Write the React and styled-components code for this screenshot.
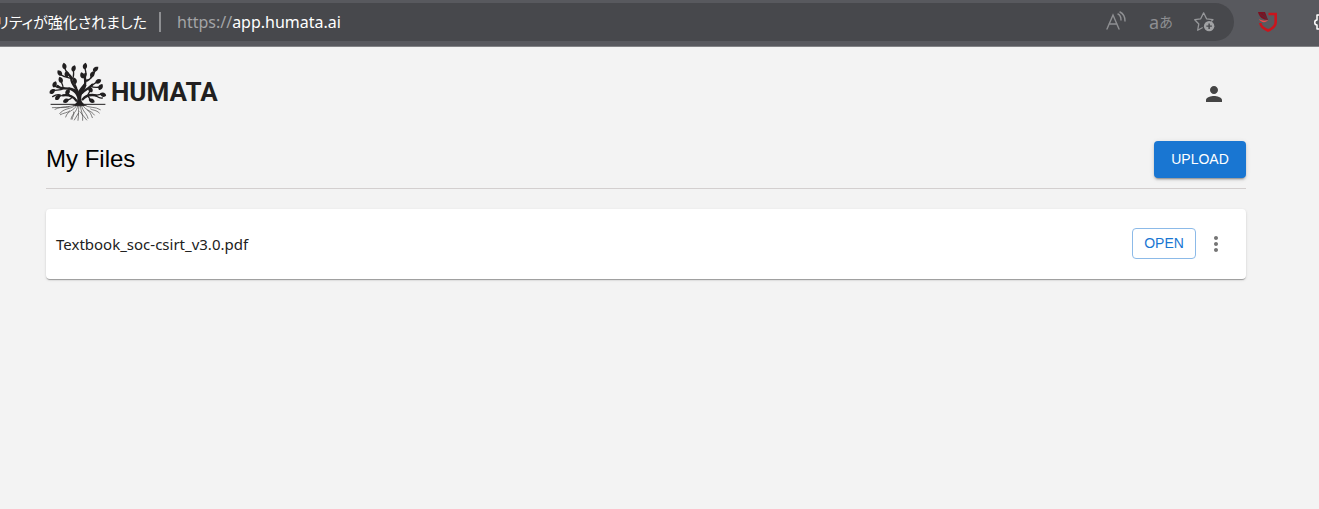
import React, { useState } from 'react';
import styled, { createGlobalStyle } from 'styled-components';
import { MdMoreVert, MdPerson } from 'react-icons/md';

const files = [{ id: 1, name: 'Textbook_soc-csirt_v3.0.pdf' }];

const leaves = [
  [56, 18, -10], [84, 25, 20], [118, 18, 10], [42, 39, -35], [63, 42, 0],
  [140, 43, 25], [27, 73, 20], [45, 60, -20], [87, 62, -15], [150, 27, 50],
  [110, 46, -20], [158, 64, 60], [20, 94, 50], [165, 81, 30], [66, 96, 30],
  [36, 112, 40], [134, 88, -30], [172, 104, -70], [61, 122, 60], [138, 122, -60],
];

const TreeLogo = () => (
  <svg width="64" height="64" viewBox="1 0 192 192" fill="none" stroke="#211f20" strokeLinecap="round">
    <path
      d="M80 136c14-4 17-13 14-24-4-14-15-21-30-25l6-5c14 3 22 7 28 14 2-9 10-16 18-26l7 5c-4 13-11 20-14 28-5 14-3 28 15 33-13 4-33 4-44 0z"
      fill="#211f20"
      stroke="none"
    />
    <g strokeWidth="7">
      <path d="M98 100C94 82 76 74 77 56C78 48 70 48 67 40M117 76c5-14-2-18 2-34" />
      <path d="M70 86c-16-2-26 2-34-8M108 100c12-14 22-12 32-26M92 122c-10-14-24-18-40-16M111 118c12-16 28-14 40-12" />
    </g>
    <g strokeWidth="4">
      <path d="M74 50c-4-10-15-14-17-27M77 56c-12-4-22-5-31-12M78 58c10-8 4-18 6-28M120 48c4-8-2-15-2-26" />
      <path d="M118 60c14 2 22-6 31-29M120 64c10 0 15-8 19-18M138 75c10-2 10-8 18-9M134 77c8 6 20 6 30 4" />
      <path d="M52 82c0-8-4-12-6-18M44 83c-12 0-16-4-17-10M55 84c-12 10-24 4-34 9M54 106c-8 0-10 2-17 6" />
      <path d="M93 84c-4-6-7-10-6-18M80 111c-10-2-12-8-14-12M80 111c-4 7-10 8-18 11M46 106c-8-4-16-2-25 4" />
      <path d="M126 107c2-8 6-10 8-17M145 106c10 2 15-6 26-2M126 107c4 6 6 10 11 15M148 106c8 4 12 10 22 8" />
    </g>
    <g fill="#211f20" stroke="none">
      {leaves.map(([x, y, angle]) => (
        <path
          key={`${x}-${y}`}
          d="M0-10C9-4 8 7 0 10C-8 7-9-4 0-10z"
          transform={`translate(${x} ${y}) rotate(${angle})`}
        />
      ))}
    </g>
    <path d="M16 133H178" strokeWidth="3" />
    <g strokeWidth="2" stroke="#444243">
      <path d="M86 135c-18 9-34 1-58 13M88 137c-15 12-34 7-46 24M92 137c-8 18-26 13-32 34M96 137c-2 19-16 22-20 40" />
      <path d="M100 137c-3 18 0 25-3 44M104 137c2 18 9 26 7 44M108 137c4 20 14 20 19 38M112 137c11 17 24 13 34 28M115 135c15 10 34 4 49 14" />
      <path d="M70 141c-17 4-34 0-50 2M72 153c-4 5-20 6-28 11M84 156c3 8-4 14-5 22M98 160l-12 20M103 155l20 25M126 151c8 3 10 13 14 22M135 147c8 5 16 2 26 12" />
    </g>
  </svg>
);

const ReadAloudIcon = () => (
  <svg width="22" height="22" viewBox="0 0 22 22" fill="none" stroke="#8e8f92" strokeWidth="1.4" strokeLinecap="round">
    <path d="M1 18 7 4l6 14M3 13h8M12 3c2 1 3 3 3 6M14 1c4 2 5 5 5 9" />
  </svg>
);

const AddFavoriteIcon = () => (
  <svg width="24" height="24" viewBox="0 0 24 24" fill="none" stroke="#96979a" strokeWidth="1.4" strokeLinejoin="round">
    <path d="M9.500 18 4 21l1.200-6.800L.8 9.500l6.500-1L10.500 2l3.200 6.500 7 1-2 2" />
    <circle cx="16.500" cy="16.500" r="5.700" fill="#a1a2a4" stroke="none" />
    <path d="M16.500 13.500v6M13.500 16.500h6" stroke="#47484c" strokeWidth="1.600" />
  </svg>
);

const ShieldIcon = () => (
  <svg width="22" height="22" viewBox="0 0 22 22">
    <path
      d="M11.500 3h7.200v8c0 4-3 6.500-7.700 8.500-4.500-2-7.500-4-7.700-7.500"
      fill="none"
      stroke="#c9151d"
      strokeWidth="2.600"
    />
    <path d="M1 1h7l3 8C6 9 2 6 1 1z" fill="#7d1020" />
    <path d="M2 8c3 2 6 2 9 1-2 3-7 3-9-1z" fill="#f04a4a" />
    <path d="M3 3l7 5M6 2l4 6" stroke="#4a3540" strokeWidth="0.700" />
  </svg>
);

const ExtensionsIcon = () => (
  <svg width="20" height="20" viewBox="0 0 20 20" fill="none" stroke="#fff" strokeWidth="1.500" strokeLinejoin="round">
    <path d="M3 3h4c0-3 5-3 5 0h4v5c-3 0-3 5 0 5v4H3v-4c-3 0-3-5 0-5z" />
  </svg>
);

const App = () => {
  const [address, setAddress] = useState('app.humata.ai');

  return (
    <>
      <GlobalStyle />
      <BrowserBar>
        <AddressField>
          <SecurityNote>リティが強化されました</SecurityNote>
          <Separator />
          <Protocol htmlFor="address">https://</Protocol>
          <AddressInput id="address" value={address} onChange={(e) => setAddress(e.target.value)} />
          <FieldActions>
            <BarButton aria-label="Read aloud">
              <ReadAloudIcon />
            </BarButton>
            <BarButton aria-label="Translate">
              a<small>あ</small>
            </BarButton>
            <BarButton aria-label="Add to favorites">
              <AddFavoriteIcon />
            </BarButton>
          </FieldActions>
        </AddressField>
        <Extensions>
          <BarButton aria-label="Security extension">
            <ShieldIcon />
          </BarButton>
          <BarButton aria-label="Extensions">
            <ExtensionsIcon />
          </BarButton>
        </Extensions>
      </BrowserBar>
      <Page>
        <Header>
          <Brand href="#">
            <TreeLogo />
            HUMATA
          </Brand>
          <IconButton aria-label="Account" $color="#444">
            <MdPerson />
          </IconButton>
        </Header>
        <TitleRow>
          <Title>My Files</Title>
          <UploadButton>UPLOAD</UploadButton>
        </TitleRow>
        <FileList>
          {files.map((file) => (
            <FileCard key={file.id}>
              <FileName>{file.name}</FileName>
              <OpenButton>OPEN</OpenButton>
              <IconButton aria-label="More options" $color="#757575">
                <MdMoreVert />
              </IconButton>
            </FileCard>
          ))}
        </FileList>
      </Page>
    </>
  );
};

export default App;

const GlobalStyle = createGlobalStyle`
  * {
    box-sizing: border-box;
  }

  body {
    margin: 0;
    background-color: #f3f3f3;
    font-family: 'Liberation Sans', Arial, sans-serif;
  }

  button {
    font-family: inherit;
    cursor: pointer;
  }
`;

const BrowserBar = styled.div`
  display: flex;
  height: 47px;
  padding: 3px 0 5px;
  overflow: hidden;
  background-color: #58595e;
  border-bottom: 1px solid #828386;
  font-family: 'Noto Sans', 'Noto Sans CJK JP', sans-serif;
  font-size: 16px;
`;

const AddressField = styled.div`
  display: flex;
  flex: 1;
  align-items: center;
  min-width: 0;
  padding-right: 16px;
  background-color: #47484c;
  border-radius: 0 19px 19px 0;
  color: #fff;
`;

const SecurityNote = styled.div`
  display: flex;
  flex-shrink: 0;
  justify-content: flex-end;
  width: 147px;
  font-family: 'Noto Sans CJK JP', sans-serif;
  font-size: 15px;
  font-feature-settings: 'palt';
  line-height: 24px;
  white-space: nowrap;
`;

const Separator = styled.div`
  width: 2px;
  height: 20px;
  margin: 0 16px 0 12px;
  background-color: #8e8f92;
`;

const Protocol = styled.label`
  color: #a3a4a6;
`;

const AddressInput = styled.input`
  flex: 1;
  min-width: 0;
  padding: 0;
  border: none;
  outline: none;
  background: none;
  color: inherit;
  font: inherit;
`;

const FieldActions = styled.div`
  display: flex;
  gap: 20px;
`;

const BarButton = styled.button`
  display: flex;
  flex-shrink: 0;
  align-items: center;
  justify-content: center;
  width: 24px;
  height: 24px;
  padding: 0 2px 0 0;
  border: none;
  background: none;
  color: #8e8f92;
  font-size: 18px;
  line-height: 20px;

  small {
    font-size: 14px;
  }
`;

const Extensions = styled.div`
  display: flex;
  gap: 32px;
  align-items: center;
  width: 85px;
  padding-left: 23px;
`;

const Page = styled.main`
  padding: 13px 73px 24px 46px;
`;

const Header = styled.header`
  display: flex;
  align-items: center;
  justify-content: space-between;
  padding: 0 20px 0 0;

  button {
    padding-top: 4px;
  }
`;

const Brand = styled.a`
  display: flex;
  align-items: center;
  gap: 1px;
  color: #211f20;
  font-family: Roboto, sans-serif;
  font-size: 26px;
  font-weight: 700;
  text-decoration: none;
`;

const IconButton = styled.button`
  display: flex;
  padding: 0;
  border: none;
  background: none;
  color: ${(props) => props.$color};
  font-size: 24px;
`;

const TitleRow = styled.div`
  display: flex;
  align-items: center;
  justify-content: space-between;
  margin-top: 17px;
  padding-bottom: 10px;
  border-bottom: 1px solid #d3cfcf;
`;

const Title = styled.h1`
  margin: 0;
  padding-bottom: 2px;
  color: #000;
  font-size: 24px;
  font-weight: 400;
`;

const UploadButton = styled.button`
  min-width: 92px;
  height: 37px;
  padding: 0 16px 2px;
  border: none;
  border-radius: 4px;
  background-color: #1976d2;
  box-shadow: 0 3px 1px -2px rgba(0, 0, 0, 0.2), 0 2px 2px 0 rgba(0, 0, 0, 0.14), 0 1px 5px 0 rgba(0, 0, 0, 0.12);
  color: #fff;
  font-size: 14px;
`;

const FileList = styled.ul`
  margin: 20px 0 0;
  padding: 0;
  list-style: none;
`;

const FileCard = styled.li`
  display: flex;
  align-items: center;
  height: 70px;
  padding: 0 18px 1px 10px;
  background-color: #fff;
  border-radius: 4px;
  box-shadow: 0 2px 1px -1px rgba(0, 0, 0, 0.2), 0 1px 1px 0 rgba(0, 0, 0, 0.14), 0 1px 3px 0 rgba(0, 0, 0, 0.12);
`;

const FileName = styled.span`
  flex: 1;
  color: #212121;
  font-family: 'Noto Sans', sans-serif;
  font-size: 15px;
`;

const OpenButton = styled.button`
  min-width: 64px;
  height: 31px;
  margin-right: 8px;
  padding: 0 9px 2px;
  border: 1px solid #8cbae8;
  border-radius: 4px;
  background-color: #fff;
  color: #1976d2;
  font-size: 14px;
`;
